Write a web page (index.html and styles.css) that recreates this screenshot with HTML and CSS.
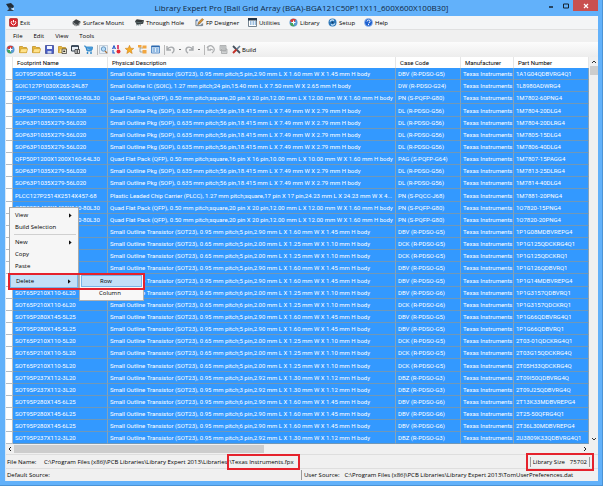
FILE: index.html
```html
<!DOCTYPE html>
<html lang="en">
<head>
<meta charset="utf-8">
<title>Library Expert Pro</title>
<link rel="stylesheet" href="styles.css">
</head>
<body>
<svg class="defs" aria-hidden="true">
  <symbol id="globe" viewBox="0 0 9 9"><circle cx="4.5" cy="4.5" r="4" fill="#5a9bd5"/><path d="M1 3a4 4 0 0 1 6-1.500L4.500 5z" fill="#d93a35"/><path d="M.8 5.500 4.500 4l1 4.200A4 4 0 0 1 .8 5.500z" fill="#46a35c"/><path d="M2.500 4.500h4M4.500 2.500v4" stroke="#fff" stroke-width="1"/></symbol>
  <symbol id="folder" viewBox="0 0 9 9"><path d="M.5 7.500V1.500h3l1 1h3v5z" fill="#e9b83c" stroke="#b98718" stroke-width=".7"/><path d="m.7 7.700 1.300-4h6.700l-1.200 4z" fill="#ffe28a" stroke="#c99722" stroke-width=".6"/></symbol>
  <symbol id="chip" viewBox="0 0 10 9"><path d="m.5 4 4-3 5 2.500-3.500 4z" fill="#3a3f42"/><path d="M.5 4v1.500l5.500 3L9.500 5V3.500L6 7.500z" fill="#80878a"/><path d="m1.500 5v2m1.500-1v2m1.500-1v2M7.500 6v2" stroke="#444" stroke-width=".8"/></symbol>
  <symbol id="arrow" viewBox="0 0 4 6"><path d="m0 0 3.500 3L0 6z" fill="#111"/></symbol>
</svg>
<main class="window">
  <header class="titlebar">
    <svg class="app-icon" viewBox="0 0 9 9"><path d="m0 1 5-1 3 3-1 2-5-1z" fill="#222d38"/><path d="M2 4h4l-1 2 3 2H1l2-2z" fill="#32404e"/><path d="m5 6 3-1v2z" fill="#eee"/></svg>
    <h1>Library Expert Pro [Ball Grid Array (BGA)-BGA121C50P11X11_600X600X100B30]</h1>
    <div class="caption">
      <button class="min" aria-label="Minimize"><svg viewBox="0 0 6 6"><path d="M1 4h4" stroke="#15222e" stroke-width="1.500"/></svg></button>
      <button class="max" aria-label="Maximize"><svg viewBox="0 0 6 6"><path d="M.5 1h5v4h-5z" fill="none" stroke="#15222e"/></svg></button>
      <button class="close" aria-label="Close"><svg viewBox="0 0 6 6"><path d="m1 1 4 4m0-4L1 5" stroke="#fff" stroke-width="1.200"/></svg></button>
    </div>
  </header>
  <div class="client">
    <nav class="modules">
      <button><svg viewBox="0 0 9 9"><rect x=".5" y=".5" width="8" height="8" rx="1" fill="#d8252b" stroke="#9c1418" stroke-width=".6"/><path d="M3 3a2.200 2.200 0 1 0 3 0M4.500 2v2.500" fill="none" stroke="#fff"/></svg>Exit</button>
      <button><svg viewBox="0 0 10 9"><use href="#chip"/></svg>Surface Mount</button>
      <button><svg viewBox="0 0 10 9"><path d="m0 3 2-2 8 1-1 4-7 1z" fill="#34393b"/><path d="m1 4 6 1 2-2M2 6v2m2-2v2m2-2v2" fill="none" stroke="#6f8588" stroke-width=".8"/></svg>Through Hole</button>
      <button><svg viewBox="0 0 10 9"><path d="M1 2v6h7V6" fill="#dce8f5" stroke="#53616f" stroke-width=".8"/><path d="M1 1h2v2H1z" fill="#4d79b5"/><path d="m3 7 1-3 4-4 1.500 1.500-4 4z" fill="#d9902c" stroke="#54432f" stroke-width=".5"/><path d="M5 8h4V5z" fill="#7b8793"/></svg>FP Designer</button>
      <button><svg viewBox="0 0 9 9"><path d="M.5 1h8v7.500h-8z" fill="#fff" stroke="#566777" stroke-width=".8"/><path d="M0 0h9v2.500H0z" fill="#203448"/><path d="M2 4h1.500m1 0H6m.7 0H8M2 6h1.500m1 0H6m.7 0H8" stroke="#3b7fc2"/></svg>Utilities</button>
      <button><svg viewBox="0 0 9 9"><use href="#globe"/></svg>Library</button>
      <button><svg viewBox="0 0 9 9"><circle cx="4.500" cy="4.500" r="4" fill="#2e77b8"/><path d="M2 3.500a3 3 0 0 1 4-1M7 5.500a3 3 0 0 1-4 1" fill="none" stroke="#d5ecff" stroke-width="1.200"/><circle cx="4.500" cy="4.500" r="1" fill="#173e65"/></svg>Setup</button>
      <button><svg viewBox="0 0 9 9"><circle cx="4.500" cy="4.500" r="4" fill="#1c5fd0" stroke="#9fc0ed" stroke-width=".8"/><path d="M3 3.500q.2-1.500 1.600-1.500T6 3.500 4.500 5M4.500 6v1.200" fill="none" stroke="#fff"/></svg>Help</button>
    </nav>
    <nav class="menubar"><button>File</button><button>Edit</button><button>View</button><button>Tools</button></nav>
    <div class="toolbar">
      <button aria-label="Library"><svg viewBox="0 0 9 9"><use href="#globe"/></svg></button>
      <button aria-label="Open"><svg viewBox="0 0 9 9"><use href="#folder"/></svg></button>
      <button aria-label="Open folder"><svg viewBox="0 0 9 9"><use href="#folder"/></svg></button>
      <button aria-label="Save"><svg viewBox="0 0 9 9"><path d="M.5.500h8v8h-8z" fill="#4b5fc6" stroke="#303e8d" stroke-width=".7"/><path d="M2 1h5v3H2z" fill="#f3f6ff"/><path d="M2.500 6h4v2.500h-4z" fill="#c5d0ed"/></svg></button>
      <button aria-label="Find in folder"><svg viewBox="0 0 9 9"><use href="#folder"/><path d="M4 4h4.500v4.500H4z" fill="#efe8cf" stroke="#333" stroke-width=".7"/><path d="m5 7 1-2 1.500 2z" fill="#222"/></svg></button>
      <button aria-label="Lock window"><svg viewBox="0 0 9 9"><path d="M.5 1h7v5h-7z" fill="#e6edf5" stroke="#333e49"/><path d="M.5 1h7" stroke="#26384d" stroke-width="1.500"/><path d="M4 4.500h4.500v4H4z" fill="#ddd" stroke="#333" stroke-width=".8"/><path d="M6.200 5v3" stroke="#222"/></svg></button>
      <button aria-label="Cart"><svg viewBox="0 0 9 9"><path d="M0 1h1.500L3 6h5M2 2h6.500L8 5H3z" fill="#69b2e9" stroke="#257fc4" stroke-width=".8"/><path d="M2.500 3.500h6M4 2v3M6 2v3" stroke="#2b88cc" stroke-width=".5"/><circle cx="3.500" cy="8" r=".9" fill="#257fc4"/><circle cx="7" cy="8" r=".9" fill="#257fc4"/></svg></button>
      <i class="sep"></i>
      <button aria-label="Search"><svg viewBox="0 0 9 9"><path d="M.5.500h8v8h-8z" fill="#e8f0f8" stroke="#a9b7c5" stroke-width=".6"/><circle cx="4.500" cy="4" r="2.200" fill="#b9ddf7" stroke="#5f8fb9" stroke-width=".9"/><path d="m6 6 2 2" stroke="#a6703b" stroke-width="1.200"/></svg></button>
      <button aria-label="Sort"><svg viewBox="0 0 9 9"><path d="m.5 4 1.500-3.500L3.500 4M1 3h2" fill="none" stroke="#2459c7"/><path d="M5 0h2v4H5z" fill="#df4b75"/><circle cx="6.500" cy="6.500" r="2" fill="#e52735"/><path d="M1 5v3h2" fill="none" stroke="#2868cf" stroke-width="1.200"/></svg></button>
      <button aria-label="Favorites"><svg viewBox="0 0 9 9"><path d="m4.500.300 1.200 2.900 3.100.200-2.400 2 .8 3.100-2.700-1.700-2.700 1.700.8-3.100-2.400-2 3.100-.200z" fill="#f6ac27" stroke="#c87b11" stroke-width=".5"/></svg></button>
      <button aria-label="Tree"><svg viewBox="0 0 9 9"><path d="M2 1v6h3M2 3h3" fill="none" stroke="#677" stroke-width=".6"/><path d="M0 0h3.500v2.500H0zM4.500.500h4v3h-4zM4.500 5h4v3.500h-4z" fill="#f2a640"/></svg></button>
      <button aria-label="Table"><svg viewBox="0 0 9 9"><path d="M.5 1h8v7h-8z" fill="#dcebfa" stroke="#3d78bd" stroke-width=".8"/><path d="M.5 1.500h8" stroke="#2c68ae" stroke-width="1.500"/><path d="M1.500 4h2.500M5 4h2.500M1.500 6h2.500M5 6h2.500" stroke="#5090cf"/></svg></button>
      <i class="sep"></i>
      <button aria-label="Undo"><svg viewBox="0 0 9 9"><path d="M1 1v4h4M1.500 4.500C3 1 8 1.500 8 5q0 2-2 3" fill="none" stroke="#a7aaad" stroke-width="1.400"/></svg></button><i class="dot"></i>
      <button aria-label="Redo"><svg viewBox="0 0 9 9"><path d="M8 1v4H4M7.500 4.500C6 1 1 1.500 1 5q0 2 2 3" fill="none" stroke="#a7aaad" stroke-width="1.400"/></svg></button><i class="dot"></i>
      <i class="sep"></i>
      <button aria-label="Pin"><svg viewBox="0 0 9 9"><path d="M1 3q3-4 6-1t-1 6M2 1v4h3M4 4l3 1" fill="none" stroke="#aeb0b2" stroke-width="1.300"/></svg></button>
      <button aria-label="Sheet"><svg viewBox="0 0 9 9"><path d="M1 .5h6v5H1zM2.500 4H8v4.500H2.500z" fill="#d0d2d3" stroke="#a5a7a8" stroke-width=".8"/><path d="M2 2h4M3.500 6h3.500" stroke="#a5a7a8" stroke-width=".8"/></svg></button>
      <button class="build"><svg viewBox="0 0 9 9"><path d="m1 1 7 7" stroke="#44515e" stroke-width="1.800"/><path d="M8 1 4.500 4.500" stroke="#647c91" stroke-width="1.600"/><path d="M4.500 4.500 1 8" stroke="#c53229" stroke-width="1.900"/></svg>Build</button>
    </div>
    <section class="grid">
      <table>
        <colgroup><col class="c-head"><col class="c-name"><col class="c-desc"><col class="c-case"><col class="c-maker"><col class="c-part"></colgroup>
        <thead><tr><th></th><th>Footprint Name</th><th>Physical Description</th><th>Case Code</th><th>Manufacturer</th><th>Part Number</th></tr></thead>
        <tbody id="rows"></tbody>
      </table>
      <div class="vscroll">
        <svg viewBox="0 0 6 4"><path d="m1 3 2-2 2 2" fill="none" stroke="#333"/></svg>
        <i></i>
        <svg class="down" viewBox="0 0 6 4"><path d="m1 1 2 2 2-2" fill="none" stroke="#333"/></svg>
      </div>
    </section>
    <div class="hscroll">
      <svg viewBox="0 0 4 6"><path d="M3 1 1 3l2 2" fill="none" stroke="#222"/></svg>
      <i></i>
      <svg viewBox="0 0 4 6"><path d="m1 1 2 2-2 2" fill="none" stroke="#222"/></svg>
    </div>
    <footer>
      <div class="status file"><span class="label">File Name:</span><span>C:\Program Files (x86)\PCB Libraries\Library Expert 2013\Libraries</span><span class="mark">\Texas Instruments.fpx</span><span class="mark size"><span>Library Size</span><span>75702</span></span></div>
      <div class="status source"><span>Default Source:</span><span class="user"><span>User Source:</span><span>C:\Program Files (x86)\PCB Libraries\Library Expert 2013\TomUserPreferences.dat</span></span></div>
    </footer>
  </div>
  <div class="context" role="menu">
    <button>View<svg viewBox="0 0 4 6"><use href="#arrow"/></svg></button>
    <button>Build Selection</button>
    <hr>
    <button>New<svg viewBox="0 0 4 6"><use href="#arrow"/></svg></button>
    <button>Copy</button>
    <button>Paste</button>
    <button class="hot delete">Delete<svg viewBox="0 0 4 6"><use href="#arrow"/></svg></button>
    <div class="submenu" role="menu"><button class="hot">Row</button><button>Column</button></div>
    <i class="outline"></i>
  </div>
</main>
<script src="rows.js"></script>
</body>
</html>
```
FILE: styles.css
```css
* { box-sizing: border-box; }
body {
  margin: 0;
  min-height: 100vh;
  background: #62b1fa;
  font: 6px/10px "Open Sans", "Liberation Sans", sans-serif;
  color: #000;
}
.defs { position: absolute; width: 0; height: 0; }
button {
  margin: 0;
  padding: 0;
  border: 0;
  background: none;
  font: inherit;
  color: inherit;
  text-align: left;
  white-space: nowrap;
}
svg { display: block; flex: none; }
.window {
  position: relative;
  display: flex;
  flex-direction: column;
  min-height: 100vh;
  padding: 0 4px 4px 5px;
  border-right: 1px solid #4b93d5;
  border-bottom: 1px solid #4b93d5;
}
.titlebar { position: relative; display: flex; justify-content: center; height: 16px; }
.app-icon { position: absolute; left: 1px; top: 3px; width: 9px; height: 9px; }
h1 { margin: 0; font: 8px/16px "Open Sans", sans-serif; white-space: nowrap; color: #10283f; }
.caption { position: absolute; right: 0; top: 0; display: flex; }
.caption button { display: flex; justify-content: center; align-items: center; width: 15px; height: 11px; }
.caption svg { width: 6px; height: 6px; }
.caption .close { width: 25px; background: #c9504f; }
.client { display: flex; flex: 1; flex-direction: column; background: #f0f0f0; border-left: 1px solid #d9e9f8; }
.modules {
  display: grid;
  grid-template-columns: 63px 63px 60px 53px 41px 39px 36px 40px;
  height: 14px;
  padding-left: 3px;
  background: #f4f5f6;
  border-bottom: 1px solid #e0e0e0;
}
.modules button { display: flex; align-items: center; gap: 2px; }
.modules svg { width: 9px; height: 9px; }
.menubar { display: flex; gap: 11px; height: 12px; padding-left: 7px; align-items: center; }
.toolbar { display: flex; gap: 4px; align-items: center; height: 15px; background: linear-gradient(#fcfcfc, #ededed); }
.toolbar button { display: flex; align-items: center; gap: 1px; }
.toolbar svg { width: 9px; height: 9px; }
.sep { width: 1px; height: 10px; margin-right: -3px; background: #b8b8b8; }
.dot { width: 2px; height: 1px; background: #777; }
.grid { display: flex; }
table { flex: 1; width: 100%; table-layout: fixed; border-spacing: 0; font: 6px/9px Roboto, "Liberation Sans", sans-serif; }
.c-head { width: 7px; }
.c-name { width: 95px; }
.c-case { width: 65px; }
.c-maker { width: 53px; }
.c-part { width: 75px; }
th, td { overflow: hidden; padding: 0 0 0 2px; text-align: left; white-space: nowrap; text-overflow: ellipsis; font-weight: normal; }
th { height: 11px; padding-left: 4px; background: #fff; border-right: 1px solid #e6e6e6; }
td { height: 12px; background: #3399ff; color: #fff; border-right: 1px solid #82a3bd; border-bottom: 1px solid #7098b8; }
tr:nth-child(7n+4) td { height: 13px; }
td:first-child { background: #fff; border-color: #b4bcc4; }
.vscroll { display: flex; flex-direction: column; align-items: center; width: 9px; padding: 3px 0; background: #f0f0f0; }
.vscroll svg { width: 6px; height: 4px; }
.vscroll i { width: 8px; height: 9px; margin-top: 2px; background: #cdcdcd; }
.vscroll .down { margin-top: auto; }
.hscroll { display: flex; align-items: center; height: 10px; padding: 1px 11px 1px 2px; }
.hscroll svg { width: 4px; height: 6px; }
.hscroll i { width: 250px; height: 8px; margin: 0 auto 0 2px; background: #cdcdcd; }
.status { display: flex; align-items: center; height: 14px; padding-left: 1px; white-space: nowrap; border-top: 1px solid #dedede; }
.source { height: 13px; }
.label { width: 37px; }
.mark { margin-left: 2px; padding: 0 4px 0 0; outline: 2px solid #e5222c; line-height: 12px; }
.size { display: flex; gap: 5px; margin: 0 8px 0 auto; padding: 0 2px; line-height: 10px; border-left: 1px solid #999; border-right: 1px solid #999; outline-offset: 2px; }
.user { display: flex; gap: 5px; width: 297px; margin-left: auto; padding-left: 2px; border-left: 1px solid #999; }
.context {
  position: absolute;
  left: 9px;
  top: 207px;
  width: 70px;
  padding: 1px 0;
  background: #f6f6f6;
  border: 1px solid #a8a8a8;
}
.context button { display: flex; align-items: center; justify-content: space-between; width: 100%; height: 12px; padding: 0 6px 0 5px; }
.context svg { width: 3px; height: 5px; }
.context hr { margin: 1px 2px 1px 4px; border: 0; border-top: 1px solid #d0d0d0; }
.context .delete { height: 14px; margin-top: 2px; }
.context .hot { background: #c3e0f8; border: 1px solid #79b5e8; }
.submenu { position: absolute; left: 69px; bottom: -12px; width: 65px; padding: 1px; background: #f8f8f8; border: 1px solid #b0b0b0; }
.context .submenu button { padding-left: 18px; }
.outline { position: absolute; left: -2px; bottom: -1px; width: 137px; height: 17px; border: 2px solid #e5222c; }
```
FILE: rows.js
```js
const sot = (pitch, pins, l, w, h) =>
  `Small Outline Transistor (SOT23), ${pitch} mm pitch;${pins} pin,${l} mm L X ${w} mm W X ${h} mm H body`;
const qfp = (n, size) =>
  `Quad Flat Pack (QFP), 0.50 mm pitch;square,${n} pin X ${n} pin,${size} mm L X ${size} mm W X 1.60 mm H body`;
const kinds = {
  A: ['SOT95P280X145-5L25', sot('0.95', 5, '2.90', '1.60', '1.45'), 'DBV (R-PDSO-G5)'],
  B: ['SOT65P210X110-5L20', sot('0.65', 5, '2.00', '1.25', '1.10'), 'DCK (R-PDSO-G5)'],
  C: ['SOT65P210X110-6L20', sot('0.65', 6, '2.00', '1.25', '1.10'), 'DCK (R-PDSO-G6)'],
  D: ['SOT65P210X110-6L20', sot('0.65', 6, '2.00', '1.25', '1.10'), 'DBV (R-PDSO-G6)'],
  E: ['SOT95P237X112-3L20', sot('0.95', 3, '2.92', '1.30', '1.12'), 'DBZ (R-PDSO-G3)'],
  F: ['SOT95P280X145-6L25', sot('0.95', 6, '2.90', '1.60', '1.45'), 'DBV (R-PDSO-G6)'],
  I: ['SOIC127P1030X265-24L87', 'Small Outline IC (SOIC), 1.27 mm pitch;24 pin,15.40 mm L X 7.50 mm W X 2.65 mm H body', 'DW (R-PDSO-G24)'],
  Q: ['QFP50P1400X1400X160-80L30', qfp(20, '12.00'), 'PN (S-PQFP-G80)'],
  R: ['QFP50P1200X1200X160-64L30', qfp(16, '10.00'), 'PAG (S-PQFP-G64)'],
  S: ['SOP63P1035X279-56L020', 'Small Outline Pkg (SOP), 0.635 mm pitch;56 pin,18.415 mm L X 7.49 mm W X 2.79 mm H body', 'DL (R-PDSO-G56)'],
  P: ['PLCC127P2514X2514X457-68', 'Plastic Leaded Chip Carrier (PLCC), 1.27 mm pitch;square,17 pin X 17 pin,24.23 mm L X 24.23 mm W X 4...', 'PN (S-PQCC-J68)']
};
const parts = `A 1A1G04QDBVRG4Q1
I 1L8980ADWRG4
Q 1M7802-60PNG4
S 1M7804-20DLG4
S 1M7804-20DLRG4
S 1M7805-15DLG4
S 1M7806-40DLG4
R 1M7807-15PAGG4
S 1M7813-25DLRG4
S 1M7814-40DLG4
P 1M7881-20PNG4
Q 1O7820-15PNG4
Q 1O7820-20PNG4
A 1P1G08MDBVREPG4
B 1P1G125QDCKRG4Q1
B 1P1G125QDCKRQ1
A 1P1G126QDBVRQ1
A 1P1G14MDBVREPG4
D 1P1G3157QDBVRQ1
C 1P1G3157QDCKRQ1
A 1P1G66QDBVRG4Q1
A 1P1G66QDBVRQ1
B 2T03-01QDCKRG4Q1
B 2T03G15QDCKRG4Q
B 2T05H33QDCKRG4Q
E 2T09I50QDBVRG4Q
E 2T09J25QDBVRG4Q
F 2T13K33MDBVREPG4
F 2T25-50QFRG4Q1
F 2T36L30MDBVREPG4
E 2U3809K33QDBVRG4Q1`;
const body = document.getElementById('rows');
for (const line of parts.split('\n')) {
  const [kind, part] = line.split(' ');
  const row = body.insertRow();
  for (const text of ['', ...kinds[kind], 'Texas Instruments', part]) row.insertCell().textContent = text;
}
```
